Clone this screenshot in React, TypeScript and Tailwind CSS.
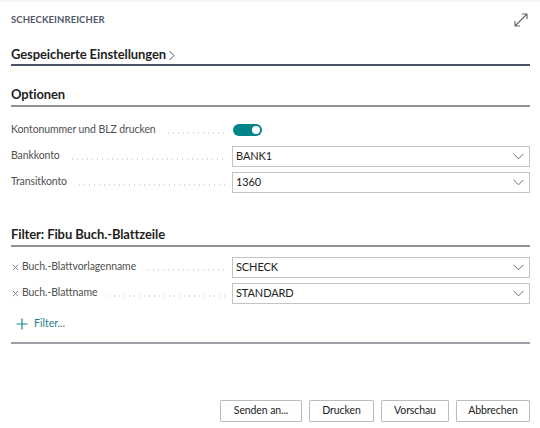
import React from "react";

const font = { fontFamily: 'Lato, "Open Sans", sans-serif' };

function Chevron() {
  return (
    <svg width="11" height="7" viewBox="0 0 11 7" className="shrink-0">
      <path d="M0.5 0.8 L5.5 5.8 L10.5 0.8" fill="none" stroke="#6b6b6b" strokeWidth="1" />
    </svg>
  );
}

function Row({ label, x, children }: { label: string; x?: boolean; children: React.ReactNode }) {
  return (
    <div className="flex items-center h-[26px]">
      <div className="w-[221px] flex items-center text-[10.5px] tracking-[-0.1px] text-[#505050] min-w-0">
        {x && (
          <svg width="7" height="7" viewBox="0 0 7 7" className="mr-[3px] ml-[1px] shrink-0">
            <path d="M0.8 0.8 L6.2 6.2 M6.2 0.8 L0.8 6.2" stroke="#777" strokeWidth="0.9" />
          </svg>
        )}
        <span className="whitespace-nowrap">{label}</span>
        <span className="flex-1 ml-[10px] mr-[5px] h-[2px] translate-y-[3px] bg-[radial-gradient(circle,#dadada_0.6px,transparent_0.8px)] bg-[length:5px_2px]" />
      </div>
      <div className="flex-1 flex items-center">{children}</div>
    </div>
  );
}

function Select({ value }: { value: string }) {
  return (
    <div className="w-full h-[21px] border border-[#c4c4c4] bg-white flex items-center justify-between pl-[3px] pr-[5px]">
      <span className="text-[11px] tracking-[-0.1px] text-[#222]">{value}</span>
      <Chevron />
    </div>
  );
}

export default function App() {
  return (
    <div className="w-[540px] h-[428px] bg-white relative overflow-hidden" style={font}>
      <div className="h-[2px] bg-[#f4f4f4]" />
      <div className="pl-[11px] pr-[10px]">
        <div className="flex items-center justify-between h-[34px] mt-[1px]">
          <span className="text-[9.5px] font-bold tracking-[0.1px] text-[#505a68]">SCHECKEINREICHER</span>
          <svg width="16" height="16" viewBox="0 0 16 16" className="mr-[1px]">
            <path d="M2 14 L14 2 M9 2 H14 V7 M2 9 V14 H7" fill="none" stroke="#666" strokeWidth="1.1" />
          </svg>
        </div>
        <div className="h-[29px] flex items-end pb-[3px] border-b-2 border-[#4a5466]">
          <span className="text-[13px] tracking-[-0.1px] font-bold text-[#1f1f1f] leading-none">Gespeicherte Einstellungen</span>
          <svg width="8" height="11" viewBox="0 0 8 11" className="ml-[2px] mb-[0px]">
            <path d="M1.5 1 L6 5.5 L1.5 10" fill="none" stroke="#555" strokeWidth="1" />
          </svg>
        </div>
        <div className="h-[41px] flex items-end pb-[4px] border-b-2 border-[#8c9196]">
          <span className="text-[13px] tracking-[-0.1px] font-bold text-[#1f1f1f] leading-none">Optionen</span>
        </div>
        <div className="mt-[10px]">
          <Row label="Kontonummer und BLZ drucken">
            <div className="ml-[1px] w-[29px] h-[12px] rounded-full bg-[#008489] flex items-center justify-end pr-[2px]">
              <div className="w-[8px] h-[8px] rounded-full bg-white" />
            </div>
          </Row>
          <Row label="Bankkonto">
            <Select value="BANK1" />
          </Row>
          <Row label="Transitkonto">
            <Select value="1360" />
          </Row>
        </div>
        <div className="h-[53px] flex items-end pb-[4px] border-b-2 border-[#8c9196] mt-[-1px]">
          <span className="text-[13px] tracking-[-0.1px] font-bold text-[#1f1f1f] leading-none">Filter: Fibu Buch.-Blattzeile</span>
        </div>
        <div className="mt-[7px]">
          <Row label="Buch.-Blattvorlagenname" x>
            <Select value="SCHECK" />
          </Row>
          <Row label="Buch.-Blattname" x>
            <Select value="STANDARD" />
          </Row>
        </div>
        <div className="flex items-center h-[26px] mt-[5px] pl-[5px]">
          <svg width="12" height="12" viewBox="0 0 12 12">
            <path d="M6 0.5 V11.5 M0.5 6 H11.5" stroke="#1a8a8e" strokeWidth="1.2" />
          </svg>
          <span className="ml-[6px] text-[10.5px] text-[#1a7f84]">Filter...</span>
        </div>
        <div className="mt-[5px] border-b-2 border-[#9aa0a6]" />
      </div>
      <div className="absolute left-0 right-0 bottom-[6px] flex justify-end gap-[7px] pr-[10px]">
        {[
          ["Senden an...", "w-[82px]"],
          ["Drucken", "w-[65px]"],
          ["Vorschau", "w-[68px]"],
          ["Abbrechen", "w-[74px]"],
        ].map(([t, w]) => (
          <div
            key={t}
            className={`${w} h-[22px] border border-[#bdbdbd] rounded-[1px] bg-white flex items-center justify-center text-[10.5px] tracking-[-0.1px] text-[#222]`}
          >
            {t}
          </div>
        ))}
      </div>
    </div>
  );
}
